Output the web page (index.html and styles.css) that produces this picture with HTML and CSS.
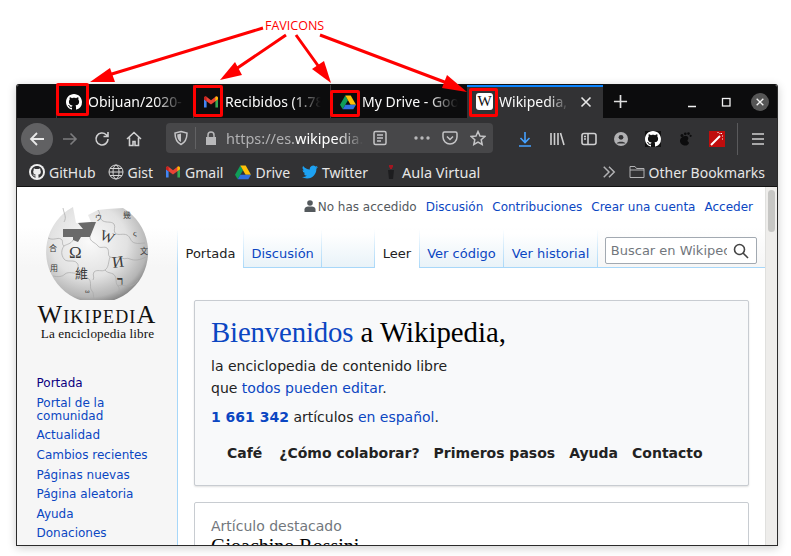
FILE: index.html
```html
<!DOCTYPE html>
<html lang="es">

<head>
    <meta charset="UTF-8">
    <title>Favicons</title>
    <link rel="stylesheet" href="styles.css">
</head>

<body>
    <svg class="defs" width="0" height="0">
        <symbol id="gh" viewBox="0 0 16 16">
            <path fill="currentColor" d="M8 0C3.58 0 0 3.58 0 8c0 3.54 2.29 6.53 5.47 7.59.4.07.55-.17.55-.38 0-.19-.01-.82-.01-1.49-2.01.37-2.53-.49-2.69-.94-.09-.23-.48-.94-.82-1.13-.28-.15-.68-.52-.01-.53.63-.01 1.08.58 1.23.82.72 1.21 1.87.87 2.33.66.07-.52.28-.87.51-1.07-1.78-.2-3.64-.89-3.64-3.95 0-.87.31-1.59.82-2.15-.08-.2-.36-1.02.08-2.12 0 0 .67-.21 2.2.82.64-.18 1.32-.27 2-.27.68 0 1.36.09 2 .27 1.53-1.04 2.2-.82 2.2-.82.44 1.1.16 1.92.08 2.12.51.56.82 1.27.82 2.15 0 3.07-1.87 3.75-3.65 3.95.29.25.54.73.54 1.48 0 1.07-.01 1.93-.01 2.2 0 .21.15.46.55.38A8.013 8.013 0 0016 8c0-4.42-3.58-8-8-8z"/>
        </symbol>
        <symbol id="gmail" viewBox="0 0 16 16">
            <path fill="#4285f4" d="M1 13.5h2.6V7.2L1 5.2z"/>
            <path fill="#34a853" d="M12.4 13.5H15V5.2l-2.6 2z"/>
            <path fill="#ea4335" d="M3.6 7.2 1 5.2V4c0-1.3 1.500-2 2.500-1.200L8 6.200l4.500-3.400C13.500 2 15 2.700 15 4v1.200l-2.600 2L8 10.500z"/>
            <path fill="#fbbc04" d="M12.400 3v4.200L15 5.200V4c0-1.300-1.500-2-2.600-1z"/>
            <path fill="#c5221f" d="M1 4v1.200l2.600 2V3C2.500 2 1 2.700 1 4z"/>
        </symbol>
        <symbol id="drive" viewBox="0 0 16 16">
            <path fill="#0f9d58" d="M5.300 1.500 0 10.700l2.700 4.500 5.300-9z"/>
            <path fill="#ffc107" d="M5.300 1.500h5.400l5.300 9.200h-5.400z"/>
            <path fill="#2f6fe0" d="M16 10.700H5.400l-2.700 4.500h10.600z"/>
        </symbol>
    </svg>

    <div class="window">
        <div class="tabbar">
            <div class="tab">
                <svg class="fav white"><use href="#gh"/></svg>
                <span class="tab-title">Obijuan/2020-</span>
            </div>
            <div class="tab">
                <svg class="fav"><use href="#gmail"/></svg>
                <span class="tab-title">Recibidos (1.78</span>
            </div>
            <div class="tab">
                <svg class="fav"><use href="#drive"/></svg>
                <span class="tab-title">My Drive - Goo</span>
            </div>
            <div class="tab active">
                <span class="w-fav">W</span>
                <span class="tab-title short">Wikipedia, l</span>
                <svg class="tab-close" viewBox="0 0 12 12"><path d="M1.500 1.500l9 9M10.500 1.500l-9 9"/></svg>
            </div>
            <svg class="newtab" viewBox="0 0 16 16"><path d="M8 1v14M1 8h14"/></svg>
            <div class="winbtns">
                <svg class="winbtn" viewBox="0 0 12 12"><path d="M2 10.500h8"/></svg>
                <svg class="winbtn" viewBox="0 0 12 12"><rect x="2.500" y="2.500" width="7.500" height="7.500"/></svg>
                <span class="winclose"><svg viewBox="0 0 12 12"><path d="M2 2l8 8M10 2l-8 8"/></svg></span>
            </div>
        </div>

        <div class="toolbar">
            <span class="back"><svg viewBox="0 0 16 16"><path d="M15 8H2M8 2L2 8l6 6"/></svg></span>
            <svg class="tool dim" viewBox="0 0 16 16"><path d="M1 8h13M8.500 2.500 14 8l-5.500 5.500"/></svg>
            <svg class="tool" viewBox="0 0 16 16"><path d="M14 8a6 6 0 1 1-1.800-4.300L14 5.500M14 1v4.500H9.500"/></svg>
            <svg class="tool" viewBox="0 0 16 16"><path d="M1 8l7-6.500L15 8M3.500 6.500V14.500h3.500v-4h2v4h3.500V6.500"/></svg>
            <div class="urlbar">
                <svg class="url-shield" viewBox="0 0 16 16"><path d="M8 1.500l6 1.500c0 5-1 9-6 11.500C3 12 2 8 2 3z"/><path class="solid" d="M8 3.500v8.500C5 10.500 4.300 8 4.200 4.500z"/></svg>
                <span class="url-sep"></span>
                <svg class="url-lock" viewBox="0 0 16 16"><path d="M3 7h10v8H3z"/><path class="open" d="M5 7V5a3 3 0 0 1 6 0v2"/></svg>
                <span class="url-text">https://es.<b>wikipedia</b>.</span>
                <svg class="url-reader" viewBox="0 0 16 16"><rect x="2" y="1.500" width="12" height="13" rx="1.500"/><path d="M5 5h6M5 8h6M5 11h4"/></svg>
                <svg class="url-dots" viewBox="0 0 16 16"><circle cx="2" cy="8" r="1.700"/><circle cx="8" cy="8" r="1.700"/><circle cx="14" cy="8" r="1.700"/></svg>
                <svg class="url-icon" viewBox="0 0 16 16"><path d="M2.500 2h11A1.500 1.500 0 0 1 15 3.500V7a7 7 0 0 1-14 0V3.500A1.500 1.500 0 0 1 2.500 2z"/><path d="M5 6.500l3 3 3-3"/></svg>
                <svg class="url-icon" viewBox="0 0 16 16"><path d="M8 1.500l2 4.500 4.800.5-3.600 3.200 1 4.800L8 12.100l-4.200 2.400 1-4.800L1.200 6.500 6 6z"/></svg>
            </div>
            <div class="tool-right">
                <svg class="tool blue" viewBox="0 0 16 16"><path d="M8 1v10M3.500 7 8 11.500 12.500 7M2 15h12"/></svg>
                <svg class="tool" viewBox="0 0 16 16"><path d="M2 2v12M5.500 2v12M9 2v12M11.500 2l3.500 12"/></svg>
                <svg class="tool" viewBox="0 0 16 16"><rect x="1" y="2.500" width="14" height="11" rx="2"/><path d="M7 2.500v11M3 5.500h2M3 8h2"/></svg>
                <svg class="tool" viewBox="0 0 16 16"><circle cx="8" cy="8" r="7" fill="#b1b1b3" stroke="none"/><circle cx="8" cy="6.300" r="2.400" fill="#323234" stroke="none"/><path d="M3.500 12.500c1-2.500 8-2.500 9 0z" fill="#323234" stroke="none"/></svg>
                <span class="gh-ext"><svg class="ext-gh"><use href="#gh"/></svg></span>
                <svg class="tool foot" viewBox="0 0 16 16"><path d="M3 10c0-3 3-5 6-5 2 0 3 2 2 3.500-1 1-.5 2 .5 2.500 1 .8 0 3.500-3 3.500-3 0-5.500-2-5.500-4.500z"/><circle cx="5" cy="4.500" r="1.500"/><circle cx="8.300" cy="2.800" r="1.400"/><circle cx="11.500" cy="2.600" r="1.300"/><circle cx="13.600" cy="4.800" r="1.100"/></svg>
                <span class="red-ext"><svg viewBox="0 0 16 16"><path d="M2 14 11 5" stroke="#fff" stroke-width="2"/><path d="M11 2v1M14 5h-1M13 2l-1 1M9 1v1M14 8h-1" stroke="#fff"/></svg></span>
                <span class="tool-sep"></span>
                <svg class="tool" viewBox="0 0 16 16"><path d="M2 3h12M2 8h12M2 13h12"/></svg>
            </div>
        </div>

        <div class="bookmarks">
            <a class="bm"><span class="bm-gh"><svg><use href="#gh"/></svg></span>GitHub</a>
            <a class="bm"><svg class="bm-icon globe-ic" viewBox="0 0 16 16"><circle cx="8" cy="8" r="7"/><ellipse cx="8" cy="8" rx="3" ry="7"/><path d="M1 8h14M2 4.500h12M2 11.500h12"/></svg>Gist</a>
            <a class="bm"><svg class="bm-icon"><use href="#gmail"/></svg>Gmail</a>
            <a class="bm"><svg class="bm-icon"><use href="#drive"/></svg>Drive</a>
            <a class="bm"><svg class="bm-icon" viewBox="0 0 24 24"><path fill="#1da1f2" d="M23.950 4.570a10 10 0 01-2.820.77 4.960 4.960 0 002.160-2.720c-.95.55-2 .95-3.120 1.180a4.920 4.920 0 00-8.380 4.480A13.960 13.960 0 011.640 3.160a4.920 4.920 0 001.520 6.570 4.900 4.900 0 01-2.230-.61v.06a4.920 4.920 0 003.950 4.830 4.900 4.900 0 01-2.220.08 4.930 4.930 0 004.600 3.420A9.870 9.870 0 010 19.540a13.940 13.940 0 007.550 2.210c9.060 0 14-7.500 14-14l-.01-.64a10 10 0 002.410-2.540z"/></svg>Twitter</a>
            <a class="bm bm-aula"><svg class="bm-icon" viewBox="0 0 16 16"><path fill="#a31621" d="M6 1h4v2l-1 1v1H7V4L6 3z"/><path fill="#1d1d1f" d="M5 6h6l-1 9H6z"/></svg>Aula Virtual</a>
            <svg class="bm-more" viewBox="0 0 16 16"><path d="M2 2l6 6-6 6M8 2l6 6-6 6"/></svg>
            <a class="bm bm-last"><svg class="bm-icon folder" viewBox="0 0 16 16"><path d="M1 13.500v-11h5l1.500 2H15v9zM1 6h14"/></svg>Other Bookmarks</a>
        </div>

        <div class="page">
            <div class="sidebar">
                <div class="logo">
                    <svg class="globe" viewBox="0 0 104 94">
                        <defs>
                            <radialGradient id="ball" cx="0.42" cy="0.36" r="0.68">
                                <stop offset="0" stop-color="#fafafa"/>
                                <stop offset="0.55" stop-color="#e2e2e2"/>
                                <stop offset="0.85" stop-color="#b5b5b5"/>
                                <stop offset="1" stop-color="#777"/>
                            </radialGradient>
                        </defs>
                        <path fill="url(#ball)" d="M28 1A51 51 0 1 0 78 2L62 3 53 4 43 9 46 16 31 17z"/>
                        <path fill="#6a6a6a" d="M18 23H38L33 17 46 16H51L45 31H36L33 36 28 34V31H18z"/>
                        <g fill="none" stroke="#a8a8a8" stroke-width="0.700">
                            <path d="M3 32c6 3 9-1 13 1 3 2 0 5 3 7M19 40c-3 4-3 9 0 13 3 4 10 0 13 4 3 3-1 7 1 10"/>
                            <path d="M45 31c0 5 5 5 8 9 2 3 6 0 9 2 3 3 0 7 3 9 4 2 8-1 12 1 3 2 5-1 8 1 5 2 10 1 16-2"/>
                            <path d="M53 4c3 4 1 9 5 11 4 2 8 0 11 3 2 3-1 6 1 9 3 3 8 0 12 2 4 2 3 7 8 8 3 1 7 0 10 0"/>
                            <path d="M33 67c-4 1-9-2-13 1-3 3-7 3-12 2M33 67c3 4 8 3 11 6 3 3 0 9 3 12 2 2 1 5 2 8"/>
                            <path d="M65 51c-2 6-1 10-5 13-3 2-8-1-11 2-2 3 1 5-1 8M60 64c3 4 8 2 10 6 2 3 0 7 3 10 2 2 1 5 1 8"/>
                            <path d="M73 80c5-2 7 1 12 0 4-1 6-3 8-6"/>
                            <path d="M18 2c1 6 4 9 1 14M28 34c-2 4-6 4-9 6"/>
                        </g>
                        <g font-family="Liberation Serif, serif" fill="#3a3a3a">
                            <text x="24" y="52" font-size="17">Ω</text>
                            <text x="55" y="36" font-size="15" transform="rotate(20 63 32)">W</text>
                            <text x="67" y="61" font-size="16" transform="rotate(-8 74 55)">И</text>
                            <text x="30" y="72" font-size="13" font-family="Noto Sans CJK SC, sans-serif">維</text>
                            <text x="72" y="79" font-size="13" font-weight="700">ר</text>
                            <text x="50" y="14" font-size="7" font-family="Noto Sans CJK SC, sans-serif">ウ</text>
                            <text x="78" y="12" font-size="8" font-family="Noto Sans CJK SC, sans-serif">幾</text>
                            <text x="88" y="30" font-size="9">ς</text>
                            <text x="95" y="48" font-size="8" font-family="Noto Sans CJK SC, sans-serif">文</text>
                            <text x="4" y="45" font-size="8" font-family="Noto Sans CJK SC, sans-serif">合</text>
                            <text x="5" y="65" font-size="8" font-family="Noto Sans CJK SC, sans-serif">用</text>
                            <text x="40" y="87" font-size="7">ω</text>
                        </g>
                    </svg>
                    <div class="wordmark">WikipediA</div>
                    <div class="tagline">La enciclopedia libre</div>
                </div>
                <ul class="side-nav">
                    <li class="current">Portada</li>
                    <li>Portal de la comunidad</li>
                    <li>Actualidad</li>
                    <li>Cambios recientes</li>
                    <li>Páginas nuevas</li>
                    <li>Página aleatoria</li>
                    <li>Ayuda</li>
                    <li>Donaciones</li>
                </ul>
            </div>

            <div class="main">
                <div class="personal">
                    <svg class="user-ic" viewBox="0 0 12 12"><circle cx="6" cy="3" r="2.800"/><path d="M0.500 12V9.500C.5 7 3 6.500 6 6.500s5.500.5 5.500 3V12z"/></svg>
                    <span class="anon">No has accedido</span>
                    <a>Discusión</a>
                    <a>Contribuciones</a>
                    <a>Crear una cuenta</a>
                    <a>Acceder</a>
                </div>
                <div class="head">
                    <div class="wtabs">
                        <span class="wtab selected">Portada</span>
                        <span class="wtab">Discusión</span>
                    </div>
                    <span class="wgap"></span>
                    <div class="wtabs">
                        <span class="wtab selected">Leer</span>
                        <span class="wtab">Ver código</span>
                        <span class="wtab">Ver historial</span>
                    </div>
                    <div class="search">
                        <span class="search-text">Buscar en Wikiped</span>
                        <svg viewBox="0 0 16 16"><circle cx="6.500" cy="6.500" r="5"/><path d="M10 10l5 5"/></svg>
                    </div>
                </div>
                <div class="body-wrap">
                    <div class="welcome">
                        <h1><a>Bienvenidos</a> a Wikipedia,</h1>
                        <p class="lines">la enciclopedia de contenido libre<br>que <a>todos pueden editar</a>.</p>
                        <p class="count"><a><b>1 661 342</b></a> artículos <a>en español</a>.</p>
                        <div class="welcome-links">
                            <b>Café</b>
                            <b>¿Cómo colaborar?</b>
                            <b>Primeros pasos</b>
                            <b>Ayuda</b>
                            <b>Contacto</b>
                        </div>
                    </div>
                    <div class="featured">
                        <div class="featured-label">Artículo destacado</div>
                        <div class="featured-title">Gioachino Rossini</div>
                    </div>
                </div>
            </div>

            <div class="scrollbar"><span class="thumb"></span></div>
        </div>
    </div>

    <!-- annotation on top of the screenshot -->
    <span class="note">FAVICONS</span>
    <span class="mark mark1"></span>
    <span class="mark mark2"></span>
    <span class="mark mark3"></span>
    <span class="mark mark4"></span>
    <svg class="arrows" viewBox="0 0 791 556">
        <path d="M263 28 102 77M286 35 230 73M296 35 324 74M320 35 455 86"/>
        <polygon points="90,82 110,68 115,82"/>
        <polygon points="220,80 235,62 242,75"/>
        <polygon points="331,83 312,69 324,61"/>
        <polygon points="467,92 447,75 442,88"/>
    </svg>
</body>

</html>
```

FILE: styles.css
```css
* {
    box-sizing: border-box;
}

body {
    margin: 0;
    width: 791px;
    height: 556px;
    padding: 84px 13px 0 16px;
    position: relative;
    overflow: hidden;
    background-color: #fff;
    font-family: 'Noto Sans', sans-serif;
}

.defs {
    position: absolute;
}

svg {
    display: block;
}

.window {
    width: 762px;
    height: 462px;
    border: 1px solid #2b2b2b;
    border-top-color: #111;
    border-radius: 3px 3px 0 0;
    box-shadow: 0 2px 10px rgba(0, 0, 0, 0.2);
    display: flex;
    flex-direction: column;
    overflow: hidden;
}

/* tab strip */
.tabbar {
    height: 33px;
    flex: none;
    background-color: #0c0c0d;
    display: flex;
    padding-left: 39px;
    color: #fbfbfb;
}

.tab {
    width: 137px;
    display: flex;
    align-items: center;
    padding-left: 9px;
    border-left: 1px solid #3a3a3c;
    font-size: 14px;
    gap: 6px;
}

.tab.active {
    background-color: #323234;
    border-left: none;
    border-top: 2px solid #0a84ff;
    padding-bottom: 2px;
    width: 136px;
}

.fav {
    width: 16px;
    height: 16px;
    flex: none;
}

.white {
    color: #fff;
}

.w-fav {
    width: 17px;
    height: 17px;
    flex: none;
    background-color: #fff;
    color: #111;
    border-radius: 3px;
    font: 15px/17px 'Liberation Serif', serif;
    text-align: center;
}

.tab-title {
    width: 96px;
    white-space: nowrap;
    overflow: hidden;
    -webkit-mask-image: linear-gradient(to right, #000 70%, transparent);
    mask-image: linear-gradient(to right, #000 70%, transparent);
}

.tab-title.short {
    width: 70px;
    flex: none;
}

.tab-close {
    width: 12px;
    height: 12px;
    margin-left: 5px;
    flex: none;
    fill: none;
    stroke: #e8e8e8;
    stroke-width: 1.6;
}

.newtab {
    width: 15px;
    height: 15px;
    margin: 9px 0 0 10px;
    fill: none;
    stroke: #e0e0e0;
    stroke-width: 1.8;
}

.winbtns {
    display: flex;
    align-items: center;
    margin-left: 58px;
    gap: 22px;
}

.winbtn {
    width: 12px;
    height: 12px;
    fill: none;
    stroke: #f2f2f2;
    stroke-width: 1.3;
}

.winclose {
    width: 18px;
    height: 18px;
    border-radius: 50%;
    background-color: #555;
    padding: 4px;
    margin-left: -3px;
}

.winclose svg {
    width: 10px;
    height: 10px;
    fill: none;
    stroke: #f2f2f2;
    stroke-width: 1.6;
}

/* nav toolbar */
.toolbar {
    height: 40px;
    flex: none;
    background-color: #323234;
    display: flex;
    align-items: flex-start;
    padding: 5px 0 0 4px;
}

.back {
    width: 32px;
    height: 32px;
    border-radius: 50%;
    background-color: #616163;
    padding: 8px;
    flex: none;
}

.back svg {
    width: 16px;
    height: 16px;
    fill: none;
    stroke: #e8e8e8;
    stroke-width: 1.8;
}

.tool {
    width: 16px;
    height: 16px;
    margin: 8px 8px 0;
    flex: none;
    fill: none;
    stroke: #cfcfd0;
    stroke-width: 1.6;
}

.back + .tool {
    margin-left: 9px;
}

.dim {
    stroke: #7c7c7e;
}

.blue {
    stroke: #45a1ff;
}

.urlbar {
    width: 327px;
    height: 30px;
    margin-left: 16px;
    flex: none;
    background-color: #474749;
    border-radius: 4px;
    display: flex;
    align-items: center;
    padding-left: 7px;
    color: #b1b1b3;
}

.urlbar svg {
    width: 16px;
    height: 16px;
    flex: none;
    fill: none;
    stroke: #c4c4c6;
    stroke-width: 1.5;
}

.urlbar .url-shield .solid {
    fill: #c4c4c6;
    stroke: none;
}

.url-sep {
    width: 1px;
    height: 22px;
    margin: 0 7px 0 6px;
    background-color: #626264;
}

.urlbar .url-lock {
    fill: #b8b8ba;
    stroke: none;
}

.urlbar .url-lock .open {
    fill: none;
    stroke: #b8b8ba;
}

.url-text {
    width: 138px;
    margin-left: 7px;
    font-size: 14.5px;
    white-space: nowrap;
    overflow: hidden;
    -webkit-mask-image: linear-gradient(to right, #000 80%, transparent);
    mask-image: linear-gradient(to right, #000 80%, transparent);
}

.url-text b {
    font-weight: 400;
    color: #fff;
}

.urlbar .url-reader {
    margin-left: 8px;
}

.urlbar .url-dots {
    margin-left: 26px;
    fill: #b8b8ba;
    stroke: none;
}

.urlbar .url-icon {
    margin-left: 12px;
}

.tool-right {
    display: flex;
    margin-left: 16px;
}

.gh-ext {
    width: 16px;
    height: 16px;
    margin: 8px 8px 0;
    background-color: #111;
    color: #fff;
}

.ext-gh {
    width: 16px;
    height: 16px;
}

.foot {
    fill: #0c0c0d;
    stroke: none;
}

.red-ext {
    width: 16px;
    height: 16px;
    margin: 8px 8px 0;
    background-color: #c00d0d;
}

.red-ext svg {
    width: 16px;
    height: 16px;
    stroke-width: 1;
}

.tool-sep {
    width: 1px;
    height: 32px;
    margin: 0 4px;
    background-color: #5a5a5c;
}

/* bookmarks */
.bookmarks {
    height: 29px;
    flex: none;
    background-color: #323234;
    border-bottom: 1px solid #111;
    display: flex;
    align-items: center;
    padding: 0 12px;
    font-size: 14px;
    color: #e6e6e6;
}

.bm {
    display: flex;
    align-items: center;
    gap: 4px;
    margin-right: 12px;
}

.bm-aula {
    margin-left: 3px;
    font-size: 14.500px;
    gap: 3px;
}

.bm-icon {
    width: 16px;
    height: 16px;
    flex: none;
}

.bm-gh {
    width: 16px;
    height: 16px;
    border-radius: 50%;
    background-color: #eee;
    color: #323234;
    padding: 2px;
}

.bm-gh svg {
    width: 12px;
    height: 12px;
}

.globe-ic {
    fill: none;
    stroke: #d5d5d5;
    stroke-width: 1;
}

.bm-more {
    width: 14px;
    height: 14px;
    margin-left: auto;
    fill: none;
    stroke: #b1b1b3;
    stroke-width: 1.7;
}

.bm-last {
    margin: 0 0 0 13px;
}

.folder {
    fill: none;
    stroke: #b1b1b3;
    stroke-width: 1;
}

/* wikipedia page */
.page {
    flex: 1;
    min-height: 0;
    display: flex;
    background: linear-gradient(#fff 40px, #f6f6f6 80px) #f6f6f6;
    font-family: 'DejaVu Sans', sans-serif;
    overflow: hidden;
}

.sidebar {
    width: 160px;
    flex: none;
    padding-top: 19px;
}

.logo {
    text-align: center;
    color: #111;
    font-family: 'Liberation Serif', serif;
}

.globe {
    width: 104px;
    height: 94px;
    margin: 0 0 0 28px;
}

.wordmark {
    font-size: 26px;
    line-height: 24px;
    font-variant: small-caps;
    letter-spacing: 1.200px;
    margin: 3px 0 0 0;
}

.tagline {
    font-size: 13.200px;
    line-height: 14px;
    margin-left: 1px;
    letter-spacing: 0.1px;
}

.side-nav {
    list-style: none;
    margin: 33px 0 0;
    padding: 0 0 0 19.500px;
    font-size: 12px;
    line-height: 13px;
    color: #0b46c2;
}

.side-nav li {
    padding: 3.300px 0;
    width: 120px;
}

.side-nav .current {
    color: #0b0080;
}

.main {
    flex: 1;
    min-width: 0;
    display: flex;
    flex-direction: column;
}

.personal {
    height: 43px;
    display: flex;
    align-items: center;
    justify-content: flex-end;
    gap: 9px;
    padding: 0 12px 3px 0;
    font-size: 12px;
    color: #0b46c2;
}

.user-ic {
    width: 12px;
    height: 12px;
    margin: -3px -7px 0 0;
    fill: #54595d;
}

.anon {
    color: #54595d;
}

.head {
    height: 38px;
    display: flex;
    border-left: 1px solid;
    border-image: linear-gradient(transparent, #a7d7f9) 1;
    font-size: 13px;
    position: relative;
}

.wtabs {
    display: flex;
}

.wtab {
    padding: 16px 7.500px 0;
    color: #0b46c2;
    background: linear-gradient(#fff 10%, #e8f2f8);
    border-right: 1px solid;
    border-image: linear-gradient(transparent, #a7d7f9) 1;
    box-shadow: inset 0 -1px #a7d7f9;
}

.wtab.selected {
    color: #222;
    background: #fff;
    box-shadow: none;
}

.wgap {
    width: 53px;
    border-right: 1px solid;
    border-image: linear-gradient(transparent, #a7d7f9) 1;
    box-shadow: inset 0 -1px #a7d7f9;
    background: linear-gradient(#fff 10%, #e8f2f8);
}

.search {
    width: 152px;
    height: 27px;
    margin: 7px 0 0 7px;
    background-color: #fff;
    border: 1px solid #a2a9b1;
    border-radius: 2px;
    display: flex;
    align-items: center;
    padding: 0 6px 0 5px;
    color: #72777d;
    flex: none;
}

.head::after {
    content: "";
    position: absolute;
    left: 420px;
    right: 0;
    bottom: 0;
    height: 1px;
    background-color: #a7d7f9;
}

.search-text {
    width: 116px;
    overflow: hidden;
    white-space: nowrap;
}

.search svg {
    width: 16px;
    height: 16px;
    margin-left: 6px;
    fill: none;
    stroke: #444;
    stroke-width: 1.600;
}

.body-wrap {
    flex: 1;
    min-height: 0;
    overflow: hidden;
    padding: 32px 16px 0;
    background-color: #fff;
    border-left: 1px solid #a7d7f9;
    font-size: 14px;
    color: #222;
}

.welcome {
    height: 186px;
    border: 1px solid #c8ccd1;
    border-radius: 2px;
    box-shadow: 0 1px 2px rgba(0, 0, 0, 0.12);
    background-color: #f8f9fa;
    padding: 14px 16px 0;
}

h1 {
    margin: -1px 0 0;
    font: 400 28.800px/36px 'Liberation Serif', serif;
    color: #000;
}

h1 a {
    letter-spacing: -0.150px;
}

.body-wrap a,
.personal a {
    color: #0b46c2;
}

.lines {
    margin: 5px 0 0;
    line-height: 22px;
}

.count {
    margin: 7px 0 0;
    line-height: 22px;
}

.welcome-links {
    margin: 14px 0 0 16px;
    display: flex;
    gap: 14px;
    line-height: 22px;
}

.welcome-links b:first-child {
    margin-right: 3px;
}

.featured {
    margin-top: 16px;
    height: 80px;
    border: 1px solid #c8ccd1;
    border-radius: 2px;
    padding: 13px 16px;
    background-color: #fff;
}

.featured-label {
    color: #72777d;
    line-height: 20px;
}

.featured-title {
    font: 20px/20px 'Liberation Serif', serif;
    color: #000;
}

.scrollbar {
    width: 12px;
    flex: none;
    background-color: #eeedeb;
    border-left: 1px solid #e0e0de;
    padding: 3px 2px;
}

.thumb {
    display: block;
    width: 7px;
    height: 42px;
    border-radius: 4px;
    background-color: #c6c6c4;
}

/* annotation */
.note {
    position: absolute;
    left: 265px;
    top: 18px;
    font: 12.500px/15px 'Open Sans', sans-serif;
    color: #f00;
}

.mark {
    position: absolute;
    border: 3px solid #f00;
    border-radius: 2px;
}

.mark1 {
    left: 56px;
    top: 83px;
    width: 33px;
    height: 33px;
}

.mark2 {
    left: 193px;
    top: 85px;
    width: 30px;
    height: 32px;
}

.mark3 {
    left: 330px;
    top: 90px;
    width: 30px;
    height: 27px;
}

.mark4 {
    left: 469px;
    top: 88px;
    width: 29px;
    height: 29px;
}

.arrows {
    position: absolute;
    left: 0;
    top: 0;
    width: 791px;
    height: 556px;
    fill: #f00;
    stroke: none;
    pointer-events: none;
}

.arrows path {
    fill: none;
    stroke: #f00;
    stroke-width: 3;
}
```
